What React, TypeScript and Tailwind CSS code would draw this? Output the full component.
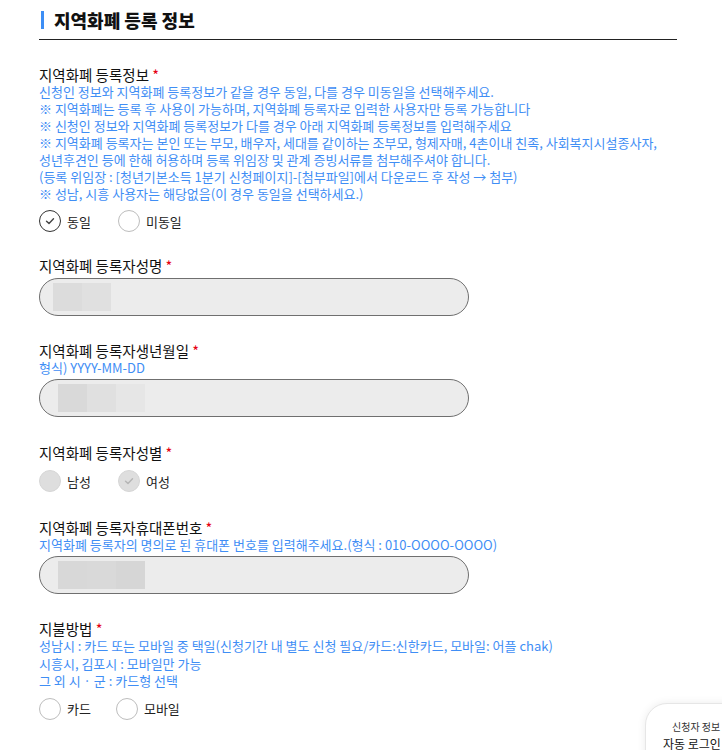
import React from 'react';

const FONT = { fontFamily: '"Noto Sans CJK KR", "Noto Sans", sans-serif' };

type RadioState = 'checked' | 'unchecked' | 'disabled' | 'disabledChecked';

const Check: React.FC<{ color: string }> = ({ color }) => (
  <svg width="12" height="12" viewBox="0 0 12 12" fill="none">
    <path d="M2.5 6.2 L5 8.4 L9.5 3.8" stroke={color} strokeWidth="1.4" strokeLinecap="round" strokeLinejoin="round" />
  </svg>
);

const Radio: React.FC<{ state: RadioState; label: string; className?: string }> = ({ state, label, className }) => {
  let circle = 'border-[#bdbdbd] bg-white';
  if (state === 'checked') circle = 'border-[#333] bg-white';
  if (state === 'disabled' || state === 'disabledChecked') circle = 'border-[#d6d6d6] bg-[#dedede]';
  return (
    <div className={`flex items-center ${className ?? ''}`}>
      <span className={`w-[22px] h-[22px] rounded-full border flex items-center justify-center ${circle}`}>
        {state === 'checked' && <Check color="#444" />}
        {state === 'disabledChecked' && <Check color="#b5b5b5" />}
      </span>
      <span className="ml-[6px] text-[13px] leading-[17px] text-[#222]">{label}</span>
    </div>
  );
};

const Label: React.FC<{ text: string }> = ({ text }) => (
  <div className="text-[14.5px] leading-[17px] text-[#111]">
    {text} <span className="text-[#e60012]">*</span>
  </div>
);

const Desc: React.FC<{ lines: string[]; lh?: string }> = ({ lines, lh = 'leading-[17px]' }) => (
  <div className={`text-[13px] ${lh} text-[#3f8ef5]`}>
    {lines.map((l, i) => (
      <div key={i} className="whitespace-nowrap">{l}</div>
    ))}
  </div>
);

const Input: React.FC<{ blocks: string[]; offset: string; mt: string }> = ({ blocks, offset, mt }) => (
  <div className={`w-[430px] h-[38px] rounded-full border border-[#6f6f6f] bg-[#ececec] flex items-center ${mt}`}>
    <div className={`flex h-[28px] ${offset}`}>
      {blocks.map((c, i) => (
        <div key={i} className="w-[29px] h-full" style={{ backgroundColor: c }} />
      ))}
    </div>
  </div>
);

const App: React.FC = () => {
  return (
    <div className="relative w-[722px] h-[750px] overflow-hidden bg-white" style={FONT}>
      <div className="pl-[39px] w-[677px]">
        <div className="flex items-center pt-[8px] h-[39px] pb-[8px]">
          <span className="w-[3px] h-[18px] bg-[#3d8ef5] ml-[2px]" />
          <h2 className="ml-[10px] text-[18px] font-black leading-[22px] text-[#111]">지역화폐 등록 정보</h2>
        </div>
        <div className="h-px bg-[#222]" />

        {/* 등록정보 */}
        <div className="mt-[26px]">
          <Label text="지역화폐 등록정보" />
          <Desc
            lines={[
              '신청인 정보와 지역화폐 등록정보가 같을 경우 동일, 다를 경우 미동일을 선택해주세요.',
              '※ 지역화폐는 등록 후 사용이 가능하며, 지역화폐 등록자로 입력한 사용자만 등록 가능합니다',
              '※ 신청인 정보와 지역화폐 등록정보가 다를 경우 아래 지역화폐 등록정보를 입력해주세요',
              '※ 지역화폐 등록자는 본인 또는 부모, 배우자, 세대를 같이하는 조부모, 형제자매, 4촌이내 친족, 사회복지시설종사자,',
              '성년후견인 등에 한해 허용하며 등록 위임장 및 관계 증빙서류를 첨부해주셔야 합니다.',
              '(등록 위임장 : [청년기본소득 1분기 신청페이지]-[첨부파일]에서 다운로드 후 작성 → 첨부)',
              '※ 성남, 시흥 사용자는 해당없음(이 경우 동일을 선택하세요.)',
            ]}
          />
          <div className="flex mt-[8px]">
            <Radio state="checked" label="동일" className="mr-[27px]" />
            <Radio state="unchecked" label="미동일" />
          </div>
        </div>

        {/* 성명 */}
        <div className="mt-[25px]">
          <Label text="지역화폐 등록자성명" />
          <Input blocks={['#dcdcdc', '#e0e0e0']} offset="ml-[13px]" mt="mt-[4px]" />
        </div>

        {/* 생년월일 */}
        <div className="mt-[26px]">
          <Label text="지역화폐 등록자생년월일" />
          <Desc lines={['형식) YYYY-MM-DD']} />
          <Input blocks={['#d9d9d9', '#e0e0e0', '#e6e6e6']} offset="ml-[18px]" mt="mt-[3px]" />
        </div>

        {/* 성별 */}
        <div className="mt-[27px]">
          <Label text="지역화폐 등록자성별" />
          <div className="flex mt-[9px]">
            <Radio state="disabled" label="남성" className="mr-[27px]" />
            <Radio state="disabledChecked" label="여성" />
          </div>
        </div>

        {/* 휴대폰 */}
        <div className="mt-[27px]">
          <Label text="지역화폐 등록자휴대폰번호" />
          <Desc lines={['지역화폐 등록자의 명의로 된 휴대폰 번호를 입력해주세요.(형식 : 010-OOOO-OOOO)']} />
          <Input blocks={['#d8d8d8', '#d9d9d9', '#d6d6d6']} offset="ml-[18px]" mt="mt-[3px]" />
        </div>

        {/* 지불방법 */}
        <div className="mt-[26px]">
          <Label text="지불방법" />
          <Desc
            lh="leading-[17.5px]"
            lines={[
              '성남시 : 카드 또는 모바일 중 택일(신청기간 내 별도 신청 필요/카드:신한카드, 모바일: 어플 chak)',
              '시흥시, 김포시 : 모바일만 가능',
              '그 외 시 · 군 : 카드형 선택',
            ]}
          />
          <div className="flex mt-[8px]">
            <Radio state="unchecked" label="카드" className="mr-[25px]" />
            <Radio state="unchecked" label="모바일" />
          </div>
        </div>
      </div>

      {/* floating panel */}
      <div className="absolute left-[645px] top-[703px] w-[160px] h-[80px] rounded-tl-[22px] bg-white border border-[#e6e6e6] shadow-[0_0_8px_rgba(0,0,0,0.08)] pt-[16px] pl-[26px]">
        <div className="text-[10px] leading-[14px] text-[#333] whitespace-nowrap">신청자 정보</div>
        <div className="ml-[-9px] mt-[2px] text-[12px] leading-[16px] text-[#111] whitespace-nowrap">자동 로그인</div>
      </div>
    </div>
  );
};

export default App;
